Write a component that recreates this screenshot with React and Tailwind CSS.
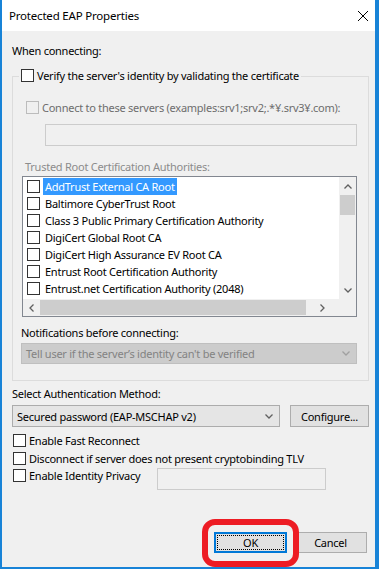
import React from "react";

const F = { fontFamily: "'Noto Sans', sans-serif" };

function Box({ disabled }) {
  return (
    <div
      className={
        "w-[13px] h-[13px] shrink-0 border " +
        (disabled ? "border-[#bcbcbc] bg-[#f0f0f0]" : "border-[#333333] bg-white")
      }
    />
  );
}

function Chevron({ dir = "down", color = "#606060", w = 8, h = 5 }) {
  const paths = {
    down: "M0.5 0.5 L4 4 L7.5 0.5",
    up: "M0.5 4.5 L4 1 L7.5 4.5",
  };
  if (dir === "left" || dir === "right") {
    return (
      <svg width={h} height={w} viewBox="0 0 5 8">
        <path
          d={dir === "left" ? "M4.5 0.5 L1 4 L4.5 7.5" : "M0.5 0.5 L4 4 L0.5 7.5"}
          fill="none"
          stroke={color}
          strokeWidth="1.3"
        />
      </svg>
    );
  }
  return (
    <svg width={w} height={h} viewBox="0 0 8 5">
      <path d={paths[dir]} fill="none" stroke={color} strokeWidth="1.3" />
    </svg>
  );
}

const items = [
  "AddTrust External CA Root",
  "Baltimore CyberTrust Root",
  "Class 3 Public Primary Certification Authority",
  "DigiCert Global Root CA",
  "DigiCert High Assurance EV Root CA",
  "Entrust Root Certification Authority",
  "Entrust.net Certification Authority (2048)",
];

export default function App() {
  return (
    <div
      className="relative w-[379px] h-[569px] bg-[#1883d7] overflow-hidden text-[11px] leading-[15px] tracking-[-0.25px] text-black whitespace-nowrap"
      style={F}
    >
      <div className="ml-[2px] w-[373px] h-[567px] flex flex-col bg-[#f0f0f0]">
        {/* Title bar */}
        <div className="h-[31px] bg-white flex items-center justify-between pl-[7px] pr-[5px]">
          <span className="text-[11.5px] tracking-[-0.2px]">Protected EAP Properties</span>
          <svg width="12" height="12" viewBox="0 0 12 12" className="mr-[1px]">
            <path d="M1 1 L11 11 M11 1 L1 11" stroke="#000" strokeWidth="1" />
          </svg>
        </div>

        <div className="flex flex-col pl-[10px]">
          <div className="mt-[12px] h-[15px]">When connecting:</div>

          {/* Group box */}
          <div className="mt-[18px] w-[357px] h-[305px] border border-[#dcdcdc] flex flex-col">
            <div className="-mt-[8px] ml-[6px] self-start bg-[#f0f0f0] px-[2px] h-[13px] flex items-center gap-[3px]">
              <Box />
              <span>Verify the server's identity by validating the certificate</span>
            </div>

            <div className="mt-[19px] ml-[13px] h-[13px] flex items-center gap-[3px] text-[#6d6d6d]">
              <Box disabled />
              <span>Connect to these servers (examples:srv1;srv2;.*¥.srv3¥.com):</span>
            </div>

            <div className="mt-[10px] ml-[32px] w-[312px] h-[22px] border border-[#cccccc] bg-[#f0f0f0]" />

            <div className="mt-[13px] ml-[12px] h-[15px] text-[#8c8c8c]">Trusted Root Certification Authorities:</div>

            {/* List */}
            <div className="mt-[2px] ml-[9px] w-[335px] h-[141px] border border-[#828790] bg-white flex flex-col">
              <div className="flex flex-1 min-h-0">
                <div className="flex-1 flex flex-col pt-[1px] overflow-hidden">
                  {items.map((t, i) => (
                    <div key={t} className="h-[17px] flex items-center pl-[4px]">
                      <Box />
                      <span
                        className={
                          "ml-[3px] px-[2px] h-[17px] flex items-center " +
                          (i === 0 ? "bg-[#3399ff] text-white" : "")
                        }
                      >
                        {t}
                      </span>
                    </div>
                  ))}
                </div>
                <div className="w-[17px] bg-[#f0f0f0] flex flex-col items-center">
                  <div className="h-[18px] flex items-center justify-center">
                    <Chevron dir="up" />
                  </div>
                  <div className="w-[15px] h-[20px] bg-[#cdcdcd]" />
                  <div className="flex-1" />
                  <div className="h-[17px] flex items-center justify-center">
                    <Chevron dir="down" />
                  </div>
                </div>
              </div>
              <div className="h-[17px] flex bg-[#f0f0f0]">
                <div className="w-[17px] flex items-center justify-center">
                  <Chevron dir="left" />
                </div>
                <div className="w-[266px] h-[15px] my-[1px] bg-[#cdcdcd]" />
                <div className="flex-1 flex items-center justify-center">
                  <Chevron dir="right" />
                </div>
                <div className="w-[17px] bg-[#f0f0f0]" />
              </div>
            </div>

            <div className="mt-[8px] ml-[8px] h-[15px]">Notifications before connecting:</div>
            <div className="mt-[3px] ml-[8px] w-[336px] h-[21px] border border-[#bfbfbf] bg-[#cccccc] flex items-center justify-between pl-[4px] pr-[6px] text-[#838383]">
              <span>Tell user if the server’s identity can't be verified</span>
              <Chevron dir="down" color="#a0a0a0" />
            </div>
          </div>

          <div className="mt-[5px] h-[15px]">Select Authentication Method:</div>

          <div className="mt-[4px] flex items-center gap-[10px]">
            <div className="w-[268px] h-[22px] border border-[#acacac] bg-[#e5e5e5] flex items-center justify-between pl-[4px] pr-[6px]">
              <span>Secured password (EAP-MSCHAP v2)</span>
              <Chevron dir="down" />
            </div>
            <div className="w-[79px] h-[22px] border border-[#adadad] bg-[#e1e1e1] flex items-center justify-center">
              Configure...
            </div>
          </div>

          <div className="mt-[7px] ml-[1px] h-[13px] flex items-center gap-[3px]">
            <Box />
            <span>Enable Fast Reconnect</span>
          </div>
          <div className="mt-[5px] ml-[1px] h-[13px] flex items-center gap-[3px]">
            <Box />
            <span>Disconnect if server does not present cryptobinding TLV</span>
          </div>
          <div className="mt-[4px] ml-[1px] flex items-start">
            <div className="h-[13px] w-[144px] flex items-center gap-[3px]">
              <Box />
              <span>Enable Identity Privacy</span>
            </div>
            <div className="-mt-[1px] w-[169px] h-[22px] border border-[#cccccc] bg-[#f0f0f0]" />
          </div>

          {/* Buttons */}
          <div className="mt-[42px] ml-[202px] flex gap-[7px]">
            <div className="relative w-[73px] h-[21px] border-2 border-[#0078d7] bg-[#e1e1e1] flex items-center justify-center">
              <div className="absolute inset-[1px] border border-dotted border-black" />
              <span className="relative">OK</span>
              <div className="absolute -left-[14px] -top-[15px] w-[97px] h-[48px] border-[6px] border-[#ed1c24] rounded-[13px]" />
            </div>
            <div className="w-[73px] h-[21px] border border-[#adadad] bg-[#e1e1e1] flex items-center justify-center">
              Cancel
            </div>
          </div>
        </div>
      </div>
    </div>
  );
}
